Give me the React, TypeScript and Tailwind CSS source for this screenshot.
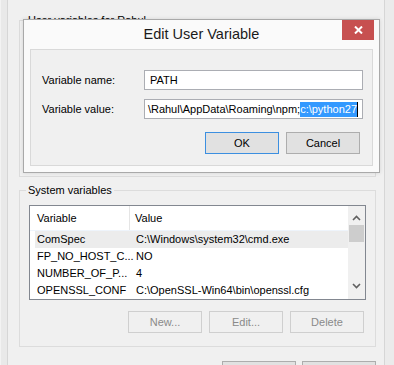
import React from "react";

function Chevron({ up }: { up?: boolean }) {
  return (
    <svg width="9" height="6" viewBox="0 0 9 6" className="block">
      {up ? (
        <path d="M1 5 L4.5 1.5 L8 5" fill="none" stroke="#606060" strokeWidth="1.6" />
      ) : (
        <path d="M1 1 L4.5 4.5 L8 1" fill="none" stroke="#606060" strokeWidth="1.6" />
      )}
    </svg>
  );
}

const rows: [string, string][] = [
  ["ComSpec", "C:\\Windows\\system32\\cmd.exe"],
  ["FP_NO_HOST_C...", "NO"],
  ["NUMBER_OF_P...", "4"],
  ["OPENSSL_CONF", "C:\\OpenSSL-Win64\\bin\\openssl.cfg"],
];

export default function App() {
  return (
    <div className="relative w-[394px] h-[365px] overflow-hidden bg-[#f0f0f0] flex font-['Liberation_Sans',Arial,sans-serif] text-[11px] text-black">
      {/* left frame */}
      <div className="w-[8px] h-full bg-[#e9e9e9] border-l border-[#f3f3f3] border-r border-r-[#d6d6d6]" />
      {/* parent content */}
      <div className="flex-1 flex flex-col pl-[11px] pr-[8px]">
        <fieldset className="mt-[13px] h-[164px] shrink-0 border border-[#dcdcdc]">
          <legend className="ml-[6px] px-[2px] leading-[14px]">User variables for Rahul</legend>
        </fieldset>
        <fieldset className="mt-[6px] h-[164px] shrink-0 border border-[#dcdcdc] flex flex-col">
          <legend className="ml-[6px] px-[2px] leading-[14px]">System variables</legend>
          <div className="mt-[8px] ml-[9px] w-[337px] h-[95px] border border-[#828790] bg-white flex">
            <div className="flex-1 flex flex-col overflow-hidden">
              <div className="h-[25px] flex items-center border-b border-[#eef4fb] shrink-0">
                <div className="w-[100px] h-full flex items-center pl-[7px] border-r border-[#e5e5e5]">Variable</div>
                <div className="pl-[5px]">Value</div>
              </div>
              {rows.map(([k, v], i) => (
                <div key={k} className="h-[17px] pl-[5px] shrink-0 flex">
                  <div className={"flex-1 flex items-center " + (i === 0 ? "bg-[#ececec]" : "")}>
                    <div className="w-[95px] pl-[2px] whitespace-nowrap">{k}</div>
                    <div className="pl-[6px] whitespace-nowrap">{v}</div>
                  </div>
                </div>
              ))}
            </div>
            <div className="w-[17px] bg-[#f0f0f0] flex flex-col items-center">
              <div className="h-[18px] flex items-end pb-[3px]">
                <Chevron up />
              </div>
              <div className="mt-[1px] w-[15px] h-[17px] bg-[#cdcdcd]" />
              <div className="flex-1" />
              <div className="h-[14px] flex items-start pt-[1px] mb-[3px]">
                <Chevron />
              </div>
            </div>
          </div>
          <div className="mt-[11px] flex justify-end gap-[7px] pr-[11px]">
            {["New...", "Edit...", "Delete"].map((t) => (
              <div
                key={t}
                className="w-[74px] h-[22px] border border-[#cfcfcf] bg-[#f0f0f0] text-[#8a8a8a] flex items-center justify-center"
              >
                {t}
              </div>
            ))}
          </div>
        </fieldset>
        <div className="mt-[14px] flex justify-end gap-[6px] shrink-0">
          <div className="w-[74px] h-[22px] border border-[#adadad] bg-[#e1e1e1]" />
          <div className="w-[74px] h-[22px] border border-[#adadad] bg-[#e1e1e1]" />
        </div>
      </div>
      {/* right frame */}
      <div className="w-[10px] h-full border-l border-[#d6d6d6] bg-[#ebebeb]" />

      {/* Dialog window */}
      <div className="absolute left-[23px] top-[19px] w-[357px] h-[154px] border border-[#a9a9a9] bg-[#fafafa] shadow-[0_0_4px_rgba(0,0,0,0.12)] flex flex-col">
        <div className="relative h-[29px] flex items-center justify-center shrink-0">
          <span className="text-[14.5px] text-[#1a1a1a]">Edit User Variable</span>
          <div className="absolute right-[5px] top-0 w-[32px] h-[20px] bg-[#c75050] flex items-center justify-center">
            <svg width="9" height="8" viewBox="0 0 9 8">
              <path d="M1 0.5 L8 7.5 M8 0.5 L1 7.5" stroke="#ffffff" strokeWidth="2" />
            </svg>
          </div>
        </div>
        <div className="mx-[6px] mb-[6px] flex-1 border border-[#d9d9d9] bg-[#f0f0f0] pt-[20px] pl-[11px] flex flex-col">
          <div className="flex items-center h-[20px]">
            <div className="w-[102px]">Variable name:</div>
            <div className="w-[219px] h-[20px] border border-[#abadb3] bg-white flex items-center pl-[5px]">PATH</div>
          </div>
          <div className="flex items-center h-[20px] mt-[9px]">
            <div className="w-[102px]">Variable value:</div>
            <div className="w-[219px] h-[20px] border border-[#abadb3] bg-white overflow-hidden flex items-center justify-end pr-[4px] whitespace-nowrap">
              <span>\Rahul\AppData\Roaming\npm;</span>
              <span className="bg-[#3399ff] text-white leading-[15px]">c:\python27</span>
              <span className="w-[1px] h-[15px] bg-black shrink-0" />
            </div>
          </div>
          <div className="mt-[13px] flex justify-end gap-[7px] pr-[12px]">
            <div className="w-[74px] h-[22px] border border-[#3c8fe0] bg-[#e1e1e1] flex items-center justify-center">OK</div>
            <div className="w-[74px] h-[22px] border border-[#adadad] bg-[#e1e1e1] flex items-center justify-center">Cancel</div>
          </div>
        </div>
      </div>
    </div>
  );
}
